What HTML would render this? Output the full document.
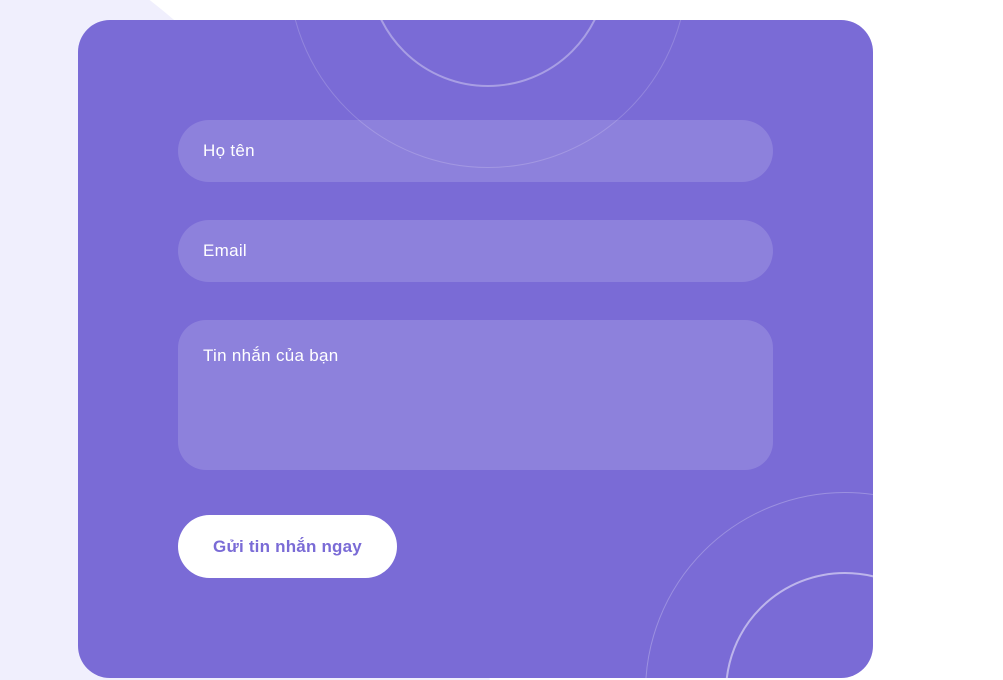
<!DOCTYPE html>
<html><head><meta charset="utf-8"><style>
html,body{margin:0;padding:0;width:1003px;height:680px;overflow:hidden;background:#fff;font-family:"Liberation Sans",sans-serif}
.wrap{position:absolute;left:0;top:0;width:1003px;height:680px;overflow:hidden}
.lav{position:absolute;left:-1290px;top:-190px;width:1780px;height:1780px;border-radius:50%;background:#f0effd}
.card{position:absolute;left:78px;top:20px;width:795px;height:658px;background:#7a6bd6;border-radius:32px;overflow:hidden}
.c{position:absolute;border-radius:50%;box-sizing:border-box}
.f{position:absolute;left:100px;width:595px;height:62px;border-radius:31px;background:rgba(255,255,255,0.15);color:#fff;font-size:17px;letter-spacing:0.3px;box-sizing:border-box;padding-left:25px;line-height:62px}
.btn{position:absolute;left:100px;top:495px;width:219px;height:63px;border-radius:32px;background:#fff;color:#7a6bd6;font-weight:bold;font-size:17px;letter-spacing:0.2px;text-align:center;line-height:63px}
</style></head><body>
<div class="wrap">
<div class="lav"></div>
<div class="card">
<div class="c" style="left:210px;top:-252px;width:400px;height:400px;border:1.5px solid rgba(255,255,255,0.18)"></div>
<div class="c" style="left:290px;top:-173px;width:240px;height:240px;border:2px solid rgba(255,255,255,0.35)"></div>
<div class="c" style="left:567px;top:472px;width:400px;height:400px;border:1.5px solid rgba(255,255,255,0.25)"></div>
<div class="c" style="left:647px;top:552px;width:240px;height:240px;border:2px solid rgba(255,255,255,0.5)"></div>
<div class="f" style="top:100px">Họ tên</div>
<div class="f" style="top:200px">Email</div>
<div class="f" style="top:300px;height:150px;border-radius:28px;line-height:normal;padding-top:26px">Tin nhắn của bạn</div>
<div class="btn">Gửi tin nhắn ngay</div>
</div>
</div>
</body></html>
